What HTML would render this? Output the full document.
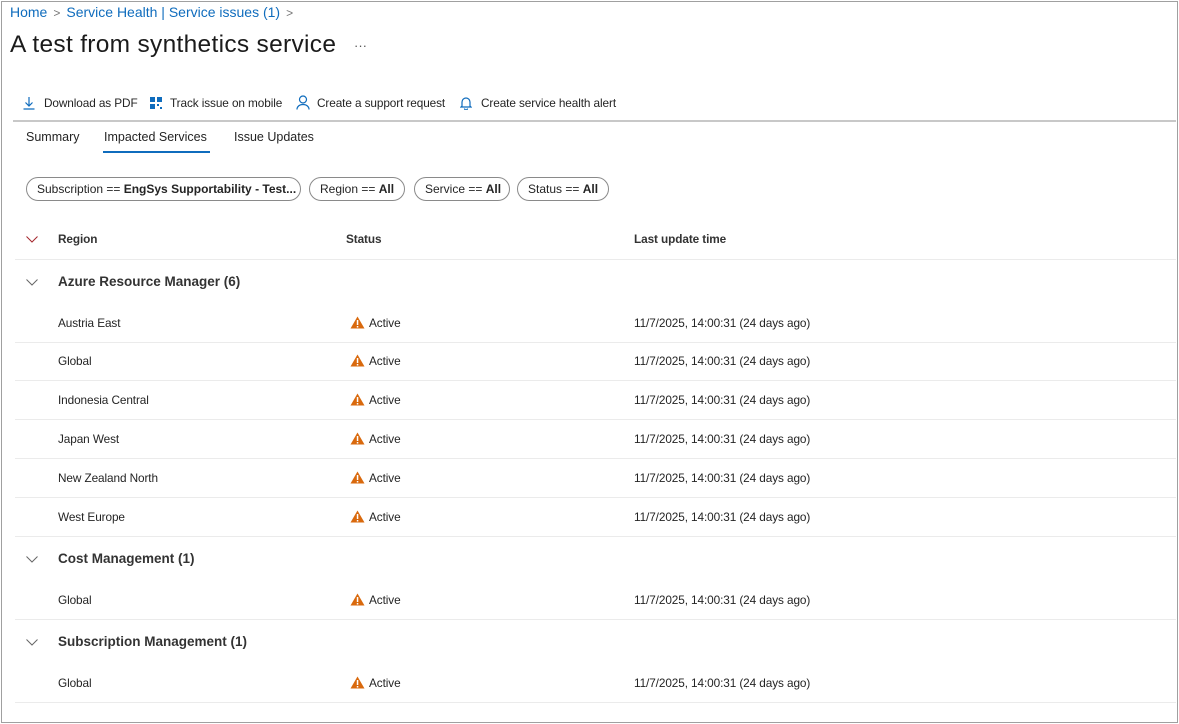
<!DOCTYPE html>
<html><head><style>
body{margin:0;width:1179px;height:724px;overflow:hidden;background:#fff;font-family:"Liberation Sans",sans-serif;color:#242424;position:relative}
.frame{position:absolute;left:1px;top:1px;width:1175px;height:720px;border:1px solid #a0a0a0}
.a{position:absolute;white-space:nowrap}
.bc{top:4px;left:10px;font-size:14px;color:#0f6cbd}
.bc span{color:#777;margin:0 6px;font-size:12px}
h1{position:absolute;margin:0;left:10px;top:31px;font-size:24.5px;font-weight:normal;color:#1b1b1b;letter-spacing:0.3px}
.tb{top:96px;font-size:11.8px;color:#242424;letter-spacing:-0.1px}
.tabs{top:130px;font-size:12.5px}
.pill{position:absolute;top:177px;height:24px;border:1px solid #8a8a8a;border-radius:12px;font-size:12px;line-height:23px;padding:0 10px;box-sizing:border-box;white-space:nowrap}
.sep{position:absolute;left:15px;width:1161px;height:1px;background:#ebebeb}
.t{position:absolute;font-size:11.8px;white-space:nowrap;letter-spacing:-0.1px}
.g{font-size:13.5px;font-weight:bold;color:#333;letter-spacing:0}
.chev{position:absolute;left:26px;width:12px;height:7px}
</style></head><body>
<div class="frame"></div>
<div class="a bc">Home<span>&gt;</span>Service Health | Service issues (1)<span>&gt;</span></div>
<h1>A test from synthetics service</h1>
<div class="a" style="left:354px;top:38px;font-size:13px;color:#555">···</div>
<svg class="a" style="left:22px;top:96px" width="14" height="14" viewBox="0 0 14 14" fill="none" stroke="#0f6cbd" stroke-width="1.2"><path d="M7 1v9M3.5 6.5L7 10l3.5-3.5M1.5 13h11"/></svg>
<div class="a tb" style="left:44px">Download as PDF</div>
<svg class="a" style="left:150px;top:97px" width="12" height="12" viewBox="0 0 12 12" fill="#0f6cbd"><rect x="0" y="0" width="5" height="5"/><rect x="7" y="0" width="5" height="5"/><rect x="0" y="7" width="5" height="5"/><rect x="7" y="7" width="2" height="2"/><rect x="10" y="10" width="2" height="2"/></svg>
<div class="a tb" style="left:170px">Track issue on mobile</div>
<svg class="a" style="left:296px;top:95px" width="14" height="15" viewBox="0 0 14 15" fill="none" stroke="#0f6cbd" stroke-width="1.2"><circle cx="7" cy="4.5" r="3.5"/><path d="M1 14.5c0-3 2.5-5 6-5s6 2 6 5"/></svg>
<div class="a tb" style="left:317px">Create a support request</div>
<svg class="a" style="left:460px;top:96px" width="12" height="14" viewBox="0 0 12 14" fill="none" stroke="#0f6cbd" stroke-width="1.2"><path d="M2 10V6a4 4 0 018 0v4l1 1H1zM4.5 12.5a1.5 1.5 0 003 0"/></svg>
<div class="a tb" style="left:481px">Create service health alert</div>
<div style="position:absolute;left:13px;top:120px;width:1163px;height:2px;background:#c8c8c8"></div>
<div class="a tabs" style="left:26px">Summary</div>
<div class="a tabs" style="left:104px">Impacted Services</div>
<div style="position:absolute;left:103px;top:151px;width:107px;height:2px;background:#0f6cbd"></div>
<div class="a tabs" style="left:234px">Issue Updates</div>
<div class="pill" style="left:26px;width:275px">Subscription == <b>EngSys Supportability - Test...</b></div>
<div class="pill" style="left:309px;width:96px">Region == <b>All</b></div>
<div class="pill" style="left:414px;width:96px">Service == <b>All</b></div>
<div class="pill" style="left:517px;width:92px">Status == <b>All</b></div>

<svg class="chev" style="top:236px" viewBox="0 0 12 7"><path d="M0.5 0.5L6 6L11.5 0.5" fill="none" stroke="#a4262c" stroke-width="1"/></svg>
<div class="t" style="left:58px;top:232px;font-weight:bold;color:#333">Region</div>
<div class="t" style="left:346px;top:232px;font-weight:bold;color:#333">Status</div>
<div class="t" style="left:634px;top:232px;font-weight:bold;color:#333">Last update time</div>
<div class="sep" style="top:259px"></div>

<div id="rows"></div>
<script>
var html='';
function grp(name,y){html+='<svg class="chev" style="top:'+(y-3)+'px" viewBox="0 0 12 7"><path d="M0.5 0.5L6 6L11.5 0.5" fill="none" stroke="#666" stroke-width="1"/></svg><div class="t g" style="left:58px;top:'+(y-8)+'px">'+name+'</div>';}
function row(r,y){html+='<div class="t" style="left:58px;top:'+(y-7)+'px">'+r+'</div>'+
'<svg style="position:absolute;left:350px;top:'+(y-7)+'px" width="15" height="13" viewBox="0 0 15 13"><path d="M7.5 0.5L14.5 12.5H0.5Z" fill="#d9690d"/><rect x="6.8" y="4" width="1.5" height="5" fill="#fff"/><rect x="6.8" y="10" width="1.5" height="1.5" fill="#fff"/></svg>'+
'<div class="t" style="left:369px;top:'+(y-7)+'px">Active</div><div class="t" style="left:634px;top:'+(y-7)+'px">11/7/2025, 14:00:31 (24 days ago)</div><div class="sep" style="top:'+(y+19)+'px"></div>';}
grp('Azure Resource Manager (6)',282);
['Austria East','Global','Indonesia Central','Japan West','New Zealand North','West Europe'].forEach(function(r,i){row(r,323+i*39-(i>0?1:0));});
grp('Cost Management (1)',559);row('Global',600);
grp('Subscription Management (1)',642);row('Global',683);
document.getElementById('rows').innerHTML=html;
</script>
</body></html>
